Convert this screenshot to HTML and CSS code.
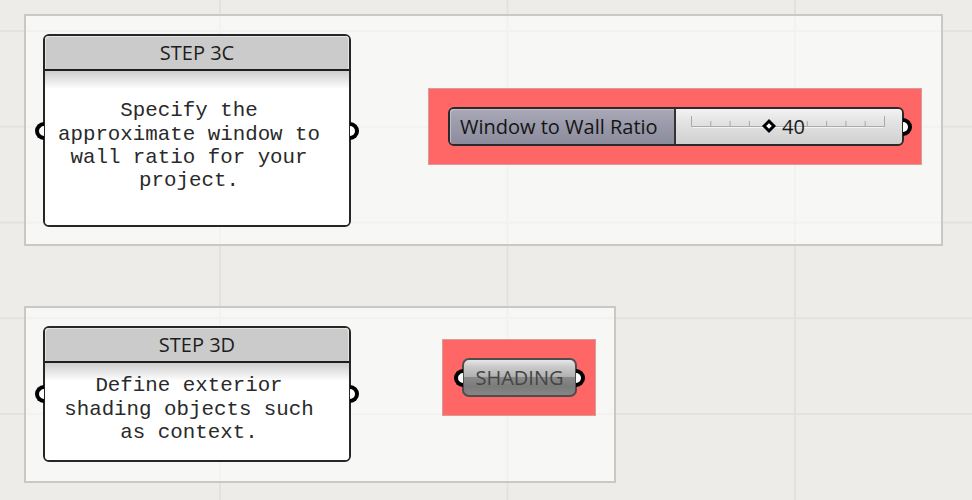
FILE: index.html
```html
<!DOCTYPE html>
<html lang="en">
<head>
<meta charset="utf-8">
<title>Canvas</title>
<link rel="stylesheet" href="styles.css">
</head>
<body>
<div class="canvas">
  <div class="group group-a">
    <div class="panel panel-tall">
      <span class="grip grip-in"></span>
      <div class="panel-head">STEP 3C</div>
      <div class="panel-body">Specify the<br>approximate window to<br>wall ratio for your<br>project.</div>
      <span class="grip grip-out"></span>
    </div>
    <div class="hl hl-slider">
      <div class="slider">
        <div class="slider-label">Window to Wall Ratio</div>
        <div class="slider-value">
          <svg class="track" width="196" height="13" viewBox="0 0 196 13">
            <g stroke="#a9a9a9" stroke-width="1" fill="none">
              <path d="M0.5 1V11.5H193.5V1"/>
              <path d="M19.8 6V11M39.1 6V11M58.4 6V11M116.3 6V11M135.6 6V11M154.9 6V11M174.2 6V11"/>
            </g>
            <path d="M1.5 12.5H192.5" stroke="#f4f4f4" stroke-width="1"/>
          </svg>
          <span class="knob"></span>
          <span class="value">40</span>
        </div>
        <span class="grip grip-out"></span>
      </div>
    </div>
  </div>

  <div class="group group-b">
    <div class="panel panel-short">
      <span class="grip grip-in"></span>
      <div class="panel-head">STEP 3D</div>
      <div class="panel-body">Define exterior<br>shading objects such<br>as context.</div>
      <span class="grip grip-out"></span>
    </div>
    <div class="hl hl-button">
      <div class="button">
        <span class="grip grip-in"></span>
        SHADING
        <span class="grip grip-out"></span>
      </div>
    </div>
  </div>
</div>
</body>
</html>
```
FILE: styles.css
```css
* { box-sizing: border-box; }
html, body { margin: 0; padding: 0; }
body { background: #edece8; font-family: "Open Sans", "Noto Sans", sans-serif; }

.canvas {
  position: relative;
  width: 972px;
  height: 500px;
  overflow: hidden;
  background-color: #edece8;
  background-image:
    linear-gradient(90deg, #e2e1dd 2px, transparent 2px),
    linear-gradient(180deg, #e3e2de 2px, transparent 2px);
  background-size: 287.5px 100%, 100% 95.75px;
  background-position: 219px 0, 0 30px;
}

.group {
  position: absolute;
  display: flex;
  align-items: flex-start;
  padding: 18px 0 0 17px;
  border: 2px solid #c9c8c5;
  background: rgba(255, 255, 255, 0.56);
}
.group-a { left: 24px; top: 14px; width: 919px; height: 232px; }
.group-b { left: 24px; top: 306px; width: 592px; height: 177px; }

.panel {
  position: relative;
  display: flex;
  flex-direction: column;
  width: 308px;
  border: 2px solid #262626;
  border-radius: 6px;
  background: #fff;
  flex: none;
}
.panel-tall { height: 193px; }
.panel-short { height: 136px; }

.panel-head {
  height: 35px;
  border-bottom: 2px solid #1e1e1e;
  border-radius: 4px 4px 0 0;
  background: #cbcbcb;
  box-shadow: inset 1px 1px 0 #e4e4e4, inset -1px 0 0 #e4e4e4;
  text-align: center;
  font-size: 20px;
  line-height: 33px;
  color: #1d1d1d;
}

.panel-body {
  flex: 1;
  display: flex;
  align-items: center;
  justify-content: center;
  text-align: center;
  border-radius: 0 0 4px 4px;
  background: linear-gradient(180deg, #cdcdcd 0, #ffffff 18px);
  font-family: "Liberation Mono", "Courier New", monospace;
  font-size: 20.8px;
  line-height: 23.4px;
  color: #2a2a2a;
  padding: 0 16px 4px 0;
}

.grip {
  position: absolute;
  top: 50%;
  width: 9px;
  height: 18px;
  margin-top: -9px;
  background: #fff;
  border: 4px solid #000;
}
.grip-out {
  left: calc(100% + 1px);
  border-left: 0;
  border-radius: 0 9px 9px 0;
}
.grip-in {
  right: calc(100% + 1px);
  border-right: 0;
  border-radius: 9px 0 0 9px;
}

.hl {
  flex: none;
  border: 1px solid #d89b9b;
  background: #ff6666;
}
.hl-slider {
  width: 494px;
  height: 77px;
  margin: 54px 0 0 77px;
  padding: 18px 0 0 19px;
}
.hl-button {
  width: 154px;
  height: 77px;
  margin: 13px 0 0 91px;
  padding: 18px 0 0 19px;
}

.slider {
  position: relative;
  display: flex;
  width: 456px;
  height: 39px;
  border: 2px solid #2a2a2a;
  border-radius: 6px;
}
.slider-label {
  width: 226px;
  border-right: 2px solid #333;
  border-radius: 4px 0 0 4px;
  background: linear-gradient(180deg, #a9a9b8 0, #9a9aaa 45%, #8c8c9d 100%);
  box-shadow: inset 1px 1px 0 #bdbdca;
  padding-left: 10px;
  font-size: 20px;
  line-height: 35px;
  color: #141414;
  white-space: nowrap;
}
.slider-value {
  position: relative;
  flex: 1;
  border-radius: 0 4px 4px 0;
  background: linear-gradient(180deg, #f2f2f2 0, #e2e2e2 40%, #d0d0d0 100%);
}
.track {
  position: absolute;
  left: 15px;
  top: 6px;
}
.knob {
  position: absolute;
  left: 88px;
  top: 12px;
  width: 10px;
  height: 10px;
  background: #fff;
  border: 3px solid #000;
  transform: rotate(45deg);
}
.value {
  position: absolute;
  left: 106px;
  top: 0;
  font-size: 20px;
  line-height: 35px;
  color: #1a1a1a;
}

.button {
  position: relative;
  width: 115px;
  height: 39px;
  border: 2px solid #4e4e4e;
  border-radius: 7px;
  background: linear-gradient(180deg, #e6e6e6 0, #c9c9c9 20%, #b2b2b2 47%, #8a8a8a 50%, #7b7b7b 75%, #858585 100%);
  text-align: center;
  font-size: 20px;
  line-height: 35px;
  color: #454545;
}
```
